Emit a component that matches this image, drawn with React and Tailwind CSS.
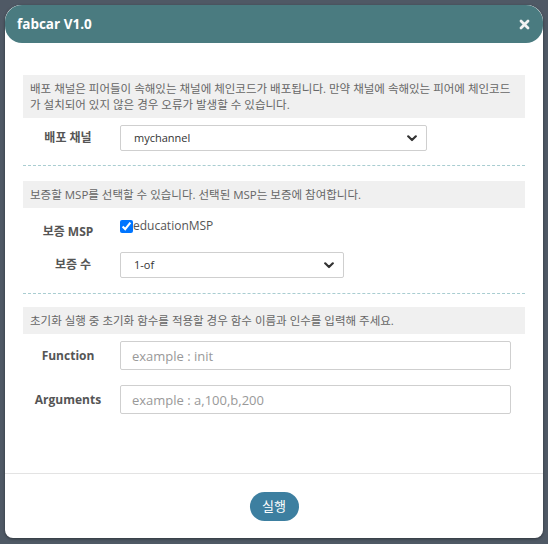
import React from 'react'

const font = { fontFamily: '"Open Sans", "Noto Sans CJK KR", sans-serif' }

const Chevron = () => (
  <svg width='10' height='7' viewBox='0 0 10 7' className='shrink-0'>
    <path d='M1.2 1.3 L5 5 L8.8 1.3' fill='none' stroke='#333' strokeWidth='2.2' strokeLinecap='round' strokeLinejoin='round' />
  </svg>
)

const FakeSelect = ({ value, width }) => (
  <div className={`${width} h-[26px] border border-[#cfcfcf] rounded-[2px] bg-white flex items-center justify-between pl-[13px] pr-[9px]`}>
    <span className='text-[11px] text-[#333]'>{value}</span>
    <Chevron />
  </div>
)

const Info = ({ children, className = '' }) => (
  <div className={`bg-[#f0f0f0] px-[7px] pt-[6px] pb-[5px] text-[11.5px] leading-[16px] text-[#666] ${className}`}>
    {children}
  </div>
)

const Label = ({ children, className = '' }) => (
  <div className={`w-[90px] shrink-0 text-center text-[12px] font-bold text-[#555] ${className}`}>{children}</div>
)

const App = () => {
  return (
    <div className='w-[548px] h-[544px] bg-[#4f5965] pt-[5px] px-[5px]' style={font}>
      <div className='w-[538px] h-[533px] bg-white rounded-t-[16px] rounded-b-[8px] flex flex-col shadow-[0_1px_3px_rgba(0,0,0,0.4)]'>
        {/* header */}
        <div className='h-[38px] shrink-0 rounded-[17px] bg-[#4a7b80] flex items-center justify-between pl-[12px] pr-[13px]'>
          <h1 className='text-[13.5px] font-bold text-white'>fabcar V1.0</h1>
          <svg width='11' height='11' viewBox='0 0 11 11'>
            <path d='M2 2 L9 9 M9 2 L2 9' stroke='#f2f2f2' strokeWidth='2.8' strokeLinecap='round' />
          </svg>
        </div>

        {/* body */}
        <div className='flex-1 px-[18px] pt-[32px]'>
          <Info>
            배포 채널은 피어들이 속해있는 채널에 체인코드가 배포됩니다. 만약 채널에 속해있는 피어에 체인코드가 설치되어 있지 않은 경우 오류가 발생할 수 있습니다.
          </Info>
          <div className='mt-[7px] flex items-center gap-[7px]'>
            <Label>배포 채널</Label>
            <FakeSelect value='mychannel' width='w-[307px]' />
          </div>
          <div className='mt-[14px] border-t border-dashed border-[#a9cdd1]' />

          <Info className='mt-[15px]'>보증할 MSP를 선택할 수 있습니다. 선택된 MSP는 보증에 참여합니다.</Info>
          <div className='mt-[11px] h-[33px] flex items-start gap-[7px]'>
            <Label className='pt-[4px]'>보증 MSP</Label>
            <label className='-mt-[2px] flex items-center text-[12px] text-[#555]'>
              <input type='checkbox' defaultChecked className='m-0 w-[13px] h-[13px]' />
              educationMSP
            </label>
          </div>
          <div className='flex items-center gap-[7px]'>
            <Label className='pl-[10px]'>보증 수</Label>
            <FakeSelect value='1-of' width='w-[224px]' />
          </div>
          <div className='mt-[15px] border-t border-dashed border-[#a9cdd1]' />

          <Info className='mt-[13px]'>초기화 실행 중 초기화 함수를 적용할 경우 함수 이름과 인수를 입력해 주세요.</Info>
          <div className='mt-[7px] flex items-center gap-[7px]'>
            <Label>Function</Label>
            <input
              placeholder='example : init'
              className='w-[391px] h-[29px] border border-[#cfcfcf] rounded-[2px] px-[11px] text-[13px] text-[#333] placeholder:text-[#999] outline-none'
            />
          </div>
          <div className='mt-[15px] flex items-center gap-[7px]'>
            <Label>Arguments</Label>
            <input
              placeholder='example : a,100,b,200'
              className='w-[391px] h-[29px] border border-[#cfcfcf] rounded-[2px] px-[11px] text-[13px] text-[#333] placeholder:text-[#999] outline-none'
            />
          </div>
        </div>

        {/* footer */}
        <div className='h-[65px] shrink-0 border-t border-[#e3e3e3] flex justify-center pt-[18px]'>
          <button className='w-[49px] h-[29px] rounded-full bg-[#3d7fa0] text-white text-[13px]'>실행</button>
        </div>
      </div>
    </div>
  )
}

export default App
